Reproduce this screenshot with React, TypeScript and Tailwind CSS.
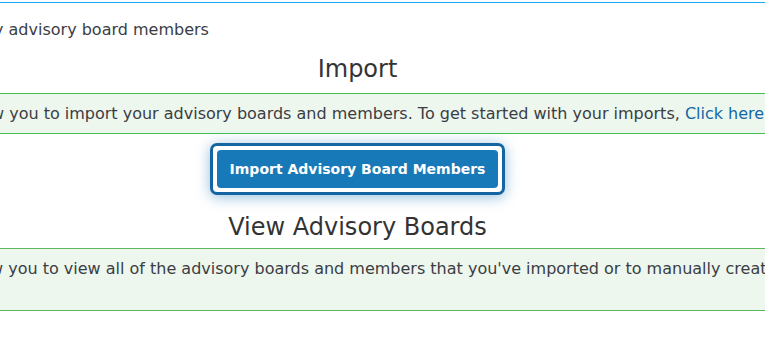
export default function App() {
  return (
    <div
      className="w-[765px] h-[340px] overflow-hidden bg-white text-[#3b3d45]"
      style={{ fontFamily: '"DejaVu Sans", sans-serif' }}
    >
      <div className="h-[2px]" />
      <div className="h-px bg-[#14aaf5]" />
      {/* intro line */}
      <p className="mt-[16px] ml-[-6px] whitespace-nowrap text-[16px] leading-[22px]">
        y advisory board members
      </p>

      {/* import section */}
      <div className="mr-[50px]">
        <h2 className="mt-[13px] text-center text-[24px] leading-[30px] font-normal text-[#333]">Import</h2>
      </div>
      <div className="mt-[9px] mx-[-2px] h-[41px] border border-[#3fbf55] bg-[#edf7ed] flex items-center overflow-hidden">
        <p className="ml-[-8px] whitespace-nowrap text-[16px] leading-[22px]">
          w you to import your advisory boards and members. To get started with your imports,{" "}
          <span className="text-[#1467a6]">Click here</span>
        </p>
      </div>

      <div className="mr-[50px] mt-[9px] flex justify-center">
        <button className="rounded-[7px] border-[3px] border-[#1565a3] bg-white p-[4px] shadow-[0_2px_14px_rgba(20,110,180,0.45)]">
          <span className="flex h-[38px] items-center rounded-[4px] bg-[#1879b8] px-[13px] text-[14px] font-bold text-white">
            Import Advisory Board Members
          </span>
        </button>
      </div>

      {/* view section */}
      <div className="mr-[50px]">
        <h2 className="mt-[17px] text-center text-[24px] leading-[30px] font-normal text-[#333]">View Advisory Boards</h2>
      </div>
      <div className="mt-[6px] mx-[-2px] h-[63px] border border-[#5cb85c] bg-[#edf7ed] overflow-hidden">
        <p className="mt-[9px] ml-[-9px] whitespace-nowrap text-[16px] leading-[22px]">
          w you to view all of the advisory boards and members that you've imported or to manually create
        </p>
      </div>
    </div>
  );
}
